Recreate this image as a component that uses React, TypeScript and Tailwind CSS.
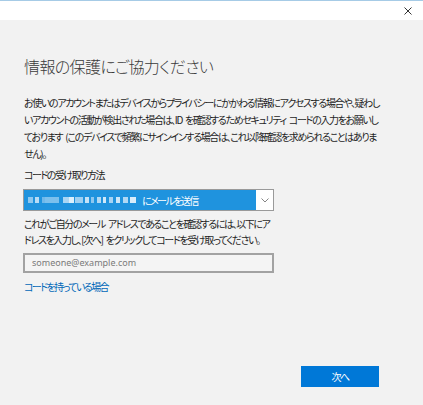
import React from "react";

const jp = { fontFamily: '"Noto Sans CJK JP", "Noto Sans", sans-serif', fontFeatureSettings: '"palt"' } as React.CSSProperties;

const blocks: [number, number, string][] = [
  [0, 5, "#8fc8ef"], [7, 4, "#b9dcf5"], [14, 3, "#6fb8ea"], [17, 14, "#7cc0ed"], [35, 6, "#a9d6f4"], [41, 5, "#dceffb"], [47, 8, "#9ccff2"], [57, 4, "#c4e2f7"], [63, 3, "#8dc7ef"], [69, 4, "#b3d9f4"], [75, 3, "#d0e8f8"], [81, 4, "#a6d3f3"], [88, 4, "#cce6f8"], [95, 5, "#b0d8f4"], [102, 6, "#d8ecfa"],
];

function Sp() {
  return <span className="inline-block w-[3px]" />;
}

export default function App() {
  return (
    <div className="w-[423px] h-[405px] bg-[#f2f2f2] flex flex-col border-t border-[#a6cbe6]" style={jp}>
      <div className="h-[19px] bg-white flex justify-end items-start pr-[11px] pt-[6px]">
        <svg width="8" height="8" viewBox="0 0 8 8">
          <path d="M0.5 0.5 L7.5 7.5 M7.5 0.5 L0.5 7.5" stroke="#333" strokeWidth="1" />
        </svg>
      </div>
      <div className="flex flex-col pl-[24px]">
        <div className="mt-[34px] h-[24px] leading-[24px] text-[16px] font-light text-[#3a3a3a] whitespace-nowrap tracking-[-0.6px]">
          情報の保護にご協力ください
        </div>
        <div className="mt-[16px] text-[10px] leading-[17px] text-[#1e1e1e] whitespace-nowrap tracking-[-1.35px]">
          お使いのアカウントまたはデバイスからプライバシーにかかわる情報にアクセスする場合や、疑わし<br />
          いアカウントの活動が検出された場合は、ID<Sp />を確認するためセキュリティ<Sp />コードの入力をお願いし<br />
          ております<Sp />(このデバイスで頻繁にサインインする場合は、これ以降確認を求められることはありま<br />
          せん)。
        </div>
        <div className="mt-[5px] text-[10px] leading-[16px] text-[#1e1e1e] whitespace-nowrap tracking-[-1.5px]">コードの受け取り方法</div>
        <div className="mt-[6px] w-[251px] h-[22px] -ml-[1px] flex border border-[#9a9a9a] bg-[#1f93de]">
          <div className="flex-1 flex items-center pl-[4px]">
            <div className="relative w-[110px] h-[6px]">
              {blocks.map(([x, w, c], i) => (
                <span key={i} className="absolute top-0 h-[6px]" style={{ left: x, width: w, background: c }} />
              ))}
            </div>
            <span className="text-white text-[10px] ml-[4px] whitespace-nowrap tracking-[-1.6px]">にメールを送信</span>
          </div>
          <div className="w-[17px] bg-white flex items-center justify-center">
            <svg width="8" height="5" viewBox="0 0 8 5">
              <path d="M0.5 0.5 L4 4 L7.5 0.5" fill="none" stroke="#777" strokeWidth="0.9" />
            </svg>
          </div>
        </div>
        <div className="mt-[5px] text-[10px] leading-[16px] text-[#1e1e1e] whitespace-nowrap tracking-[-1.4px]">
          これがご自分のメール<Sp />アドレスであることを確認するには、以下にア<br />
          ドレスを入力し、[次へ]<Sp />をクリックしてコードを受け取ってください。
        </div>
        <div className="mt-[5px] w-[251px] h-[20px] -ml-[1px] border-2 border-[#a2a2a2] bg-[#f4f4f4] flex items-center pl-[7px]">
          <span className="text-[9px] text-[#7a7a7a] whitespace-nowrap" style={{ fontFamily: '"Noto Sans", sans-serif' }}>someone@example.com</span>
        </div>
        <div className="mt-[6px] text-[10px] leading-[16px] text-[#0067b8] whitespace-nowrap tracking-[-1.6px]">コードを持っている場合</div>
      </div>
      <div className="flex-1" />
      <div className="flex justify-end pr-[44px] pb-[18px]">
        <button className="w-[78px] h-[21px] bg-[#0078d7] text-white text-[10px] tracking-[-1.5px] flex items-center justify-center">次へ</button>
      </div>
    </div>
  );
}
